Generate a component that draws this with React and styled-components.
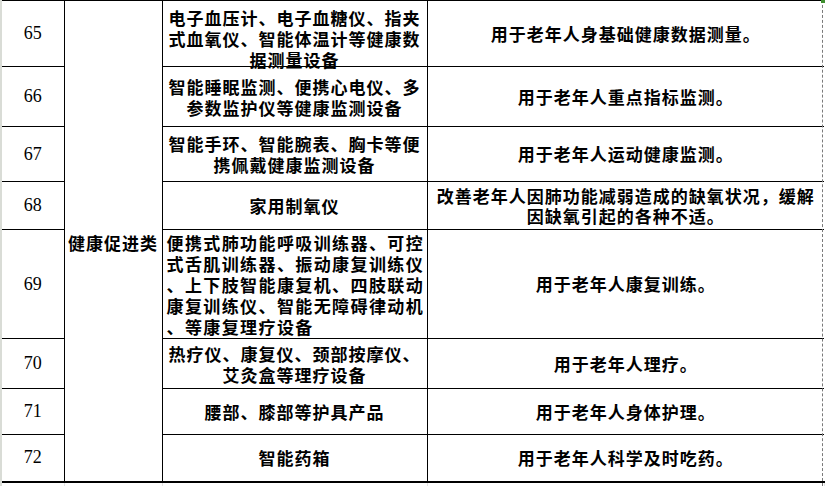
import React from 'react';
import styled, { createGlobalStyle } from 'styled-components';

const rows = [
  {
    no: 65,
    h: 66,
    product: ['电子血压计、电子血糖仪、指夹', '式血氧仪、智能体温计等健康数', '据测量设备'],
    desc: ['用于老年人身基础健康数据测量。'],
    shift: 5,
  },
  {
    no: 66,
    h: 60,
    product: ['智能睡眠监测、便携心电仪、多', '参数监护仪等健康监测设备'],
    desc: ['用于老年人重点指标监测。'],
  },
  {
    no: 67,
    h: 55,
    product: ['智能手环、智能腕表、胸卡等便', '携佩戴健康监测设备'],
    desc: ['用于老年人运动健康监测。'],
  },
  {
    no: 68,
    h: 48,
    product: ['家用制氧仪'],
    desc: ['改善老年人因肺功能减弱造成的缺氧状况，缓解', '因缺氧引起的各种不适。'],
  },
  {
    no: 69,
    h: 109,
    product: [
      '便携式肺功能呼吸训练器、可控',
      '式舌肌训练器、振动康复训练仪',
      '、上下肢智能康复机、四肢联动',
      '康复训练仪、智能无障碍律动机',
      '、等康复理疗设备',
    ],
    desc: ['用于老年人康复训练。'],
    left: true,
  },
  {
    no: 70,
    h: 50,
    product: ['热疗仪、康复仪、颈部按摩仪、', '艾灸盒等理疗设备'],
    desc: ['用于老年人理疗。'],
  },
  {
    no: 71,
    h: 46,
    product: ['腰部、膝部等护具产品'],
    desc: ['用于老年人身体护理。'],
  },
  {
    no: 72,
    h: 47,
    product: ['智能药箱'],
    desc: ['用于老年人科学及时吃药。'],
  },
];

export default function App() {
  return (
    <>
      <GlobalStyle />
      <Sheet>
        <Table>
          <colgroup>
            <col style={{ width: 63 }} />
            <col style={{ width: 98 }} />
            <col style={{ width: 265 }} />
            <col style={{ width: 397 }} />
          </colgroup>
          <tbody>
            {rows.map((row, i) => (
              <Row key={row.no} $h={row.h}>
                <NumCell>{row.no}</NumCell>
                {i === 0 && (
                  <CategoryCell rowSpan={rows.length}>健康促进类</CategoryCell>
                )}
                <ProductCell $left={row.left}>
                  <Lines $shift={row.shift}>
                    {row.product.map((line) => (
                      <Line key={line}>{line}</Line>
                    ))}
                  </Lines>
                </ProductCell>
                <DescCell>
                  {row.desc.map((line) => (
                    <Line key={line}>{line}</Line>
                  ))}
                </DescCell>
              </Row>
            ))}
            <FillerRow>
              <FillerCell $edge />
              <FillerCell />
              <FillerCell />
              <FillerCell />
            </FillerRow>
          </tbody>
        </Table>
        <PageBreak />
        <CornerMark />
      </Sheet>
    </>
  );
}

const GlobalStyle = createGlobalStyle`
  html, body {
    margin: 0;
    padding: 0;
    background: #ffffff;
  }
`;

const Sheet = styled.div`
  position: relative;
  width: 826px;
  height: 486px;
  overflow: hidden;
  background: #ffffff;
`;

const Table = styled.table`
  table-layout: fixed;
  width: 823px;
  border-collapse: collapse;
  font-family: "Noto Sans CJK SC", "Noto Sans", sans-serif;
  font-weight: 700;
  font-size: 17px;
  color: #000000;
`;

const Row = styled.tr`
  height: ${(p) => p.$h}px;
`;

const baseCell = `
  border: 1px solid #000000;
  padding: 0;
  vertical-align: middle;
  overflow: visible;
`;

const NumCell = styled.td`
  ${baseCell}
  border-left: 2px solid #d9dcd6;
  text-align: center;
  font-family: "Liberation Serif", "DejaVu Serif", serif;
  font-weight: 400;
  font-size: 18px;
`;

const CategoryCell = styled.td`
  ${baseCell}
  text-align: center;
  letter-spacing: 1px;
  padding-top: 4px;
  white-space: nowrap;
`;

const ProductCell = styled.td`
  ${baseCell}
  text-align: ${(p) => (p.$left ? 'left' : 'center')};
  padding-left: ${(p) => (p.$left ? '4px' : '0')};
  letter-spacing: ${(p) => (p.$left ? '1.4px' : '1px')};
  line-height: 21px;
  white-space: nowrap;
`;

const Lines = styled.div`
  margin-top: ${(p) => p.$shift || 0}px;
  margin-bottom: ${(p) => -(p.$shift || 0)}px;
`;

const DescCell = styled.td`
  ${baseCell}
  border-right: none;
  text-align: center;
  letter-spacing: 1px;
  line-height: 20px;
  white-space: nowrap;
`;

const Line = styled.div`
  display: block;
`;

const FillerRow = styled.tr`
  height: 5px;
`;

const FillerCell = styled.td`
  padding: 0;
  border-top: 2px solid #000000;
  border-left: ${(p) => (p.$edge ? '2px solid #d9dcd6' : 'none')};
  border-right: 1px solid #e2e2e2;
`;

const PageBreak = styled.div`
  position: absolute;
  top: 0;
  bottom: 0;
  left: 822px;
  width: 0;
  border-left: 1px dashed #7a7a7a;
`;

const CornerMark = styled.div`
  position: absolute;
  top: 0;
  left: 821px;
  width: 4px;
  height: 3px;
  background: #3f8f2f;
`;
